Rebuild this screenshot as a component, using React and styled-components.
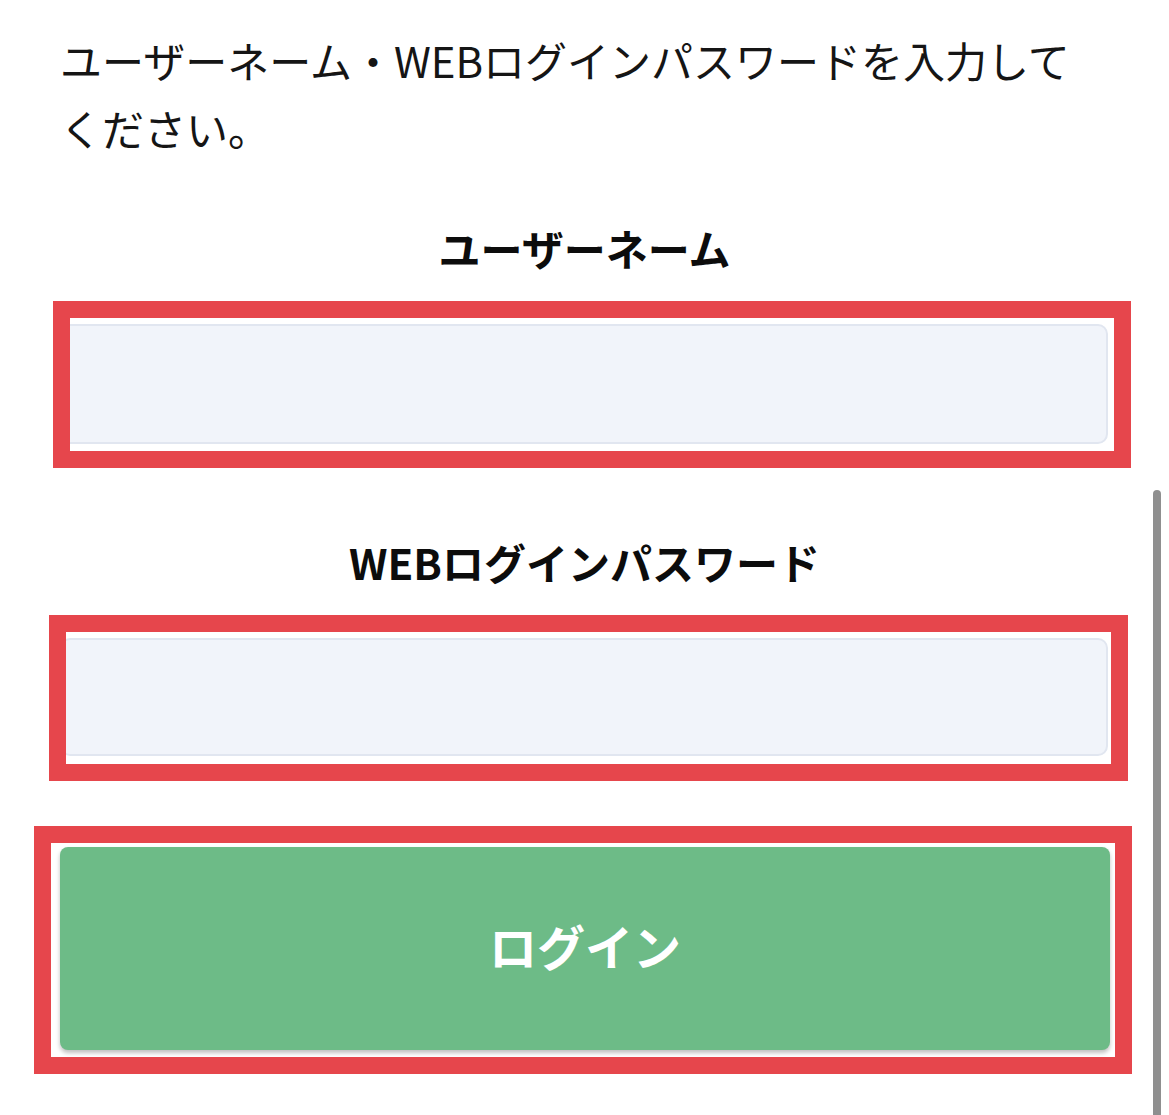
import styled, { createGlobalStyle } from "styled-components";

const GlobalStyle = createGlobalStyle`
  html, body {
    margin: 0;
    padding: 0;
    background: #ffffff;
    overflow: hidden;
  }
  body {
    font-family: "Noto Sans CJK JP", "Noto Sans", sans-serif;
    color: #111111;
  }
`;

const Page = styled.div`
  padding: 26px 60px 40px 60px;
  display: flex;
  flex-direction: column;
`;

const Intro = styled.p`
  margin: 0;
  max-width: 1030px;
  font-size: 42px;
  line-height: 68px;
  font-weight: 400;
  color: #151515;
`;

const Form = styled.form`
  margin-top: 56px;
  display: flex;
  flex-direction: column;
`;

const Label = styled.label`
  display: block;
  text-align: center;
  font-size: 42px;
  line-height: 60px;
  font-weight: 700;
  color: #0c0c0c;
  margin-top: ${(p) => p.$top || 0}px;
  margin-bottom: 46px;
`;

// red annotation frame drawn over a field
const Marked = styled.div`
  position: relative;
  margin-top: ${(p) => p.$mt || 0}px;
  &::after {
    content: "";
    position: absolute;
    top: ${(p) => -p.$t}px;
    right: ${(p) => -p.$r}px;
    bottom: ${(p) => -p.$b}px;
    left: ${(p) => -p.$l}px;
    border: 17px solid #e6464c;
    pointer-events: none;
  }
`;

const Input = styled.input`
  display: block;
  box-sizing: border-box;
  width: 1048px;
  height: ${(p) => p.$h}px;
  background: #f1f4fa;
  border: 2px solid #e1e6f0;
  border-radius: 10px;
  font-size: 36px;
  padding: 0 20px;
  outline: none;
`;

const Button = styled.button`
  display: block;
  box-sizing: border-box;
  width: 1050px;
  height: 203px;
  padding: 0 0 8px 0;
  border: none;
  border-radius: 8px;
  background: #6dbb87;
  box-shadow: 0 3px 4px rgba(0, 0, 0, 0.25);
  color: #ffffff;
  font-family: "Noto Sans CJK JP", sans-serif;
  font-size: 48px;
  font-weight: 700;
  cursor: pointer;
`;

const ScrollThumb = styled.div`
  position: fixed;
  top: 490px;
  right: 8px;
  width: 8px;
  height: 700px;
  border-radius: 4px;
  background: #8f8f8f;
`;

const App = () => {
  return (
    <>
      <GlobalStyle />
      <Page>
        <Intro>ユーザーネーム・WEBログインパスワードを入力してください。</Intro>
        <Form onSubmit={(e) => e.preventDefault()}>
          <Label htmlFor="username">ユーザーネーム</Label>
          <Marked $t={23} $r={22} $b={24} $l={7}>
            <Input id="username" type="text" $h={120} />
          </Marked>
          <Label htmlFor="password" $top={88}>WEBログインパスワード</Label>
          <Marked $t={23} $r={19} $b={25} $l={11}>
            <Input id="password" type="password" $h={118} />
          </Marked>
          <Marked $mt={91} $t={21} $r={23} $b={24} $l={26}>
            <Button type="submit">ログイン</Button>
          </Marked>
        </Form>
      </Page>
      <ScrollThumb />
    </>
  );
};

export default App;
